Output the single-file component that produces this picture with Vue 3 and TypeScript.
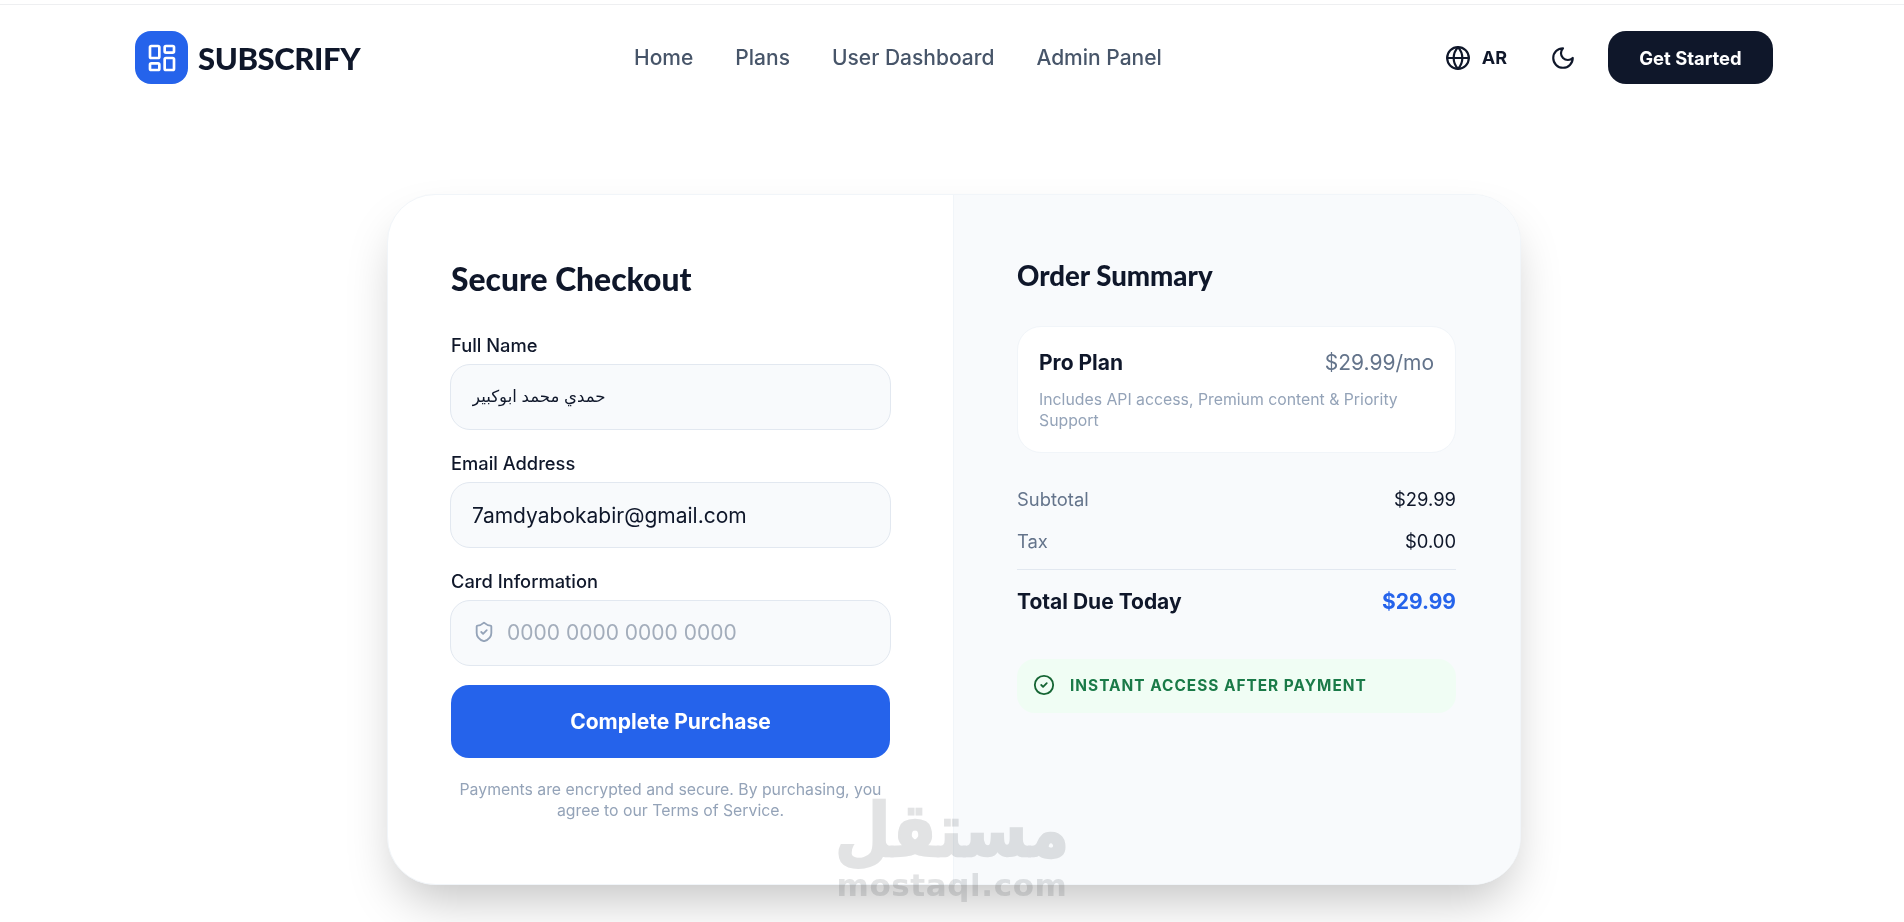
<script setup lang="ts">
import { ref } from 'vue'

const navLinks = ['Home', 'Plans', 'User Dashboard', 'Admin Panel']
const fullName = ref('حمدي محمد ابوكبير')
const email = ref('7amdyabokabir@gmail.com')
const card = ref('')
</script>

<template>
  <div class="page">
    <header class="header">
      <div class="brand">
        <span class="brand-mark">
          <svg width="32" height="32" viewBox="0 0 24 24" fill="none" stroke="#fff" stroke-width="2" stroke-linecap="round" stroke-linejoin="round">
            <rect x="3" y="3" width="7" height="9" rx="1" />
            <rect x="14" y="3" width="7" height="5" rx="1" />
            <rect x="14" y="12" width="7" height="9" rx="1" />
            <rect x="3" y="16" width="7" height="5" rx="1" />
          </svg>
        </span>
        <span class="brand-name">SUBSCRIFY</span>
      </div>
      <nav class="nav">
        <a v-for="link in navLinks" :key="link" class="nav-link">{{ link }}</a>
      </nav>
      <div class="actions">
        <span class="lang">
          <svg width="26" height="26" viewBox="0 0 24 24" fill="none" stroke="#0f172a" stroke-width="2" stroke-linecap="round" stroke-linejoin="round">
            <circle cx="12" cy="12" r="10" />
            <path d="M12 2a14.5 14.5 0 0 0 0 20 14.5 14.5 0 0 0 0-20" />
            <path d="M2 12h20" />
          </svg>
          AR
        </span>
        <svg class="moon" width="26" height="26" viewBox="0 0 24 24" fill="none" stroke="#0f172a" stroke-width="2" stroke-linecap="round" stroke-linejoin="round">
          <path d="M12 3a6 6 0 0 0 9 9 9 9 0 1 1-9-9Z" />
        </svg>
        <button class="cta">Get Started</button>
      </div>
    </header>

    <main class="checkout">
      <section class="form-col">
        <h1 class="title">Secure Checkout</h1>
        <label class="field">
          <span class="label">Full Name</span>
          <input v-model="fullName" class="input arabic" type="text" />
        </label>
        <label class="field">
          <span class="label">Email Address</span>
          <input v-model="email" class="input" type="text" />
        </label>
        <label class="field last">
          <span class="label">Card Information</span>
          <span class="input-wrap">
            <svg class="shield" width="22" height="22" viewBox="0 0 24 24" fill="none" stroke="#94a3b8" stroke-width="2" stroke-linecap="round" stroke-linejoin="round">
              <path d="M20 13c0 5-3.5 7.5-7.66 8.95a1 1 0 0 1-.67-.01C7.5 20.5 4 18 4 13V6a1 1 0 0 1 1-1c2 0 4.5-1.2 6.24-2.72a1.17 1.17 0 0 1 1.52 0C14.51 3.81 17 5 19 5a1 1 0 0 1 1 1z" />
              <path d="m9 12 2 2 4-4" />
            </svg>
            <input v-model="card" class="input with-icon" type="text" placeholder="0000 0000 0000 0000" />
          </span>
        </label>
        <button class="submit">Complete Purchase</button>
        <p class="terms">Payments are encrypted and secure. By purchasing, you agree to our Terms of Service.</p>
      </section>

      <aside class="summary-col">
        <h2 class="subtitle">Order Summary</h2>
        <div class="plan">
          <div class="plan-top">
            <span class="plan-name">Pro Plan</span>
            <span class="plan-price">$29.99/mo</span>
          </div>
          <p class="plan-desc">Includes API access, Premium content &amp; Priority Support</p>
        </div>
        <div class="row first">
          <span class="row-label">Subtotal</span>
          <span>$29.99</span>
        </div>
        <div class="row">
          <span class="row-label">Tax</span>
          <span>$0.00</span>
        </div>
        <div class="total">
          <span>Total Due Today</span>
          <span class="total-value">$29.99</span>
        </div>
        <div class="notice">
          <svg width="22" height="22" viewBox="0 0 24 24" fill="none" stroke="#166534" stroke-width="2" stroke-linecap="round" stroke-linejoin="round">
            <circle cx="12" cy="12" r="10" />
            <path d="m9 12 2 2 4-4" />
          </svg>
          <span>INSTANT ACCESS AFTER PAYMENT</span>
        </div>
      </aside>
    </main>

    <div class="watermark">
      <span class="wm-ar">مستقل</span>
      <span class="wm-en">mostaql.com</span>
    </div>
  </div>
</template>

<style>
html,
body {
  margin: 0;
  height: 100%;
  overflow: hidden;
  background: #fff;
}
</style>

<style scoped>
.page {
  position: relative;
  height: 922px;
  box-sizing: border-box;
  padding: 0 131px 0 135px;
  border-top: 1px solid transparent;
  font-family: Inter, "Liberation Sans", sans-serif;
  color: #0f172a;
  overflow: hidden;
}
.page::before {
  content: "";
  position: absolute;
  top: 3px;
  left: 0;
  right: 0;
  height: 1px;
  background: #eeeff1;
}

/* header */
.header {
  display: flex;
  align-items: center;
  justify-content: space-between;
  margin-top: 30px;
  height: 53px;
}
.brand {
  display: flex;
  align-items: center;
  gap: 10px;
}
.brand-mark {
  width: 53px;
  height: 53px;
  border-radius: 16px;
  background: #2563eb;
  display: flex;
  align-items: center;
  justify-content: center;
}
.brand-name {
  font-family: Lato, sans-serif;
  font-weight: 900;
  font-size: 31px;
  letter-spacing: -0.4px;
}
.nav {
  display: flex;
  gap: 42px;
  margin-right: 8px;
}
.nav-link {
  font-size: 21px;
  font-weight: 500;
  color: #475569;
}
.actions {
  display: flex;
  align-items: center;
}
.lang {
  display: flex;
  align-items: center;
  gap: 11px;
  font-size: 18px;
  font-weight: 700;
  margin-left: 1px;
}
.moon {
  margin-left: 43px;
}
.cta {
  margin-left: 32px;
  width: 165px;
  height: 53px;
  border: 0;
  border-radius: 18px;
  background: #0f172a;
  color: #fff;
  font-family: inherit;
  font-size: 18.4px;
  font-weight: 700;
}

/* checkout card */
.checkout {
  display: grid;
  grid-template-columns: 1fr 1fr;
  width: 1134px;
  box-sizing: border-box;
  margin: 110px auto 0;
  background: #fff;
  border: 1px solid #f1f5f9;
  border-radius: 48px;
  box-shadow: 0 25px 50px -12px rgba(0, 0, 0, 0.25);
  overflow: hidden;
}
.form-col {
  padding: 63px 63px 63px 62px;
}
.summary-col {
  padding: 63px 64px 63px 63px;
  background: #f8fafc;
  border-left: 1px solid #f1f5f9;
  margin-left: -1px;
}
.title {
  margin: 0 0 32px 1px;
  font-family: Lato, sans-serif;
  font-size: 31.8px;
  line-height: 42px;
  font-weight: 900;
}
.field {
  display: block;
  margin-bottom: 20px;
}
.field.last {
  margin-bottom: 19px;
}
.label {
  display: block;
  margin: 0 0 6px 1px;
  font-size: 18.3px;
  line-height: 26px;
  font-weight: 500;
}
.input {
  display: block;
  width: 100%;
  height: 66px;
  box-sizing: border-box;
  padding: 0 21px;
  border: 1.5px solid #e2e8f0;
  border-radius: 20px;
  background: #f8fafc;
  font-family: inherit;
  font-size: 21px;
  color: #0f172a;
  outline: none;
}
.input.arabic {
  font-family: "Liberation Sans", "DejaVu Sans", sans-serif;
  font-size: 16.6px;
}
.input::placeholder {
  color: #a3adbb;
}
.input-wrap {
  position: relative;
  display: block;
}
.shield {
  position: absolute;
  left: 23px;
  top: 21px;
}
.input.with-icon {
  padding-left: 56px;
  padding-bottom: 2px;
}
.submit {
  display: block;
  width: 439px;
  height: 73px;
  margin: 0 1px;
  border: 0;
  border-radius: 18px;
  background: #2563eb;
  color: #fff;
  font-family: inherit;
  font-size: 21px;
  font-weight: 700;
}
.terms {
  margin: 21px 0 0;
  font-size: 15.8px;
  line-height: 21px;
  color: #94a3b8;
  text-align: center;
}

/* summary */
.subtitle {
  margin: 0 0 33px;
  font-family: Lato, sans-serif;
  font-size: 27.6px;
  line-height: 35px;
  font-weight: 900;
}
.plan {
  padding: 22px 21px 21px;
  border: 1px solid #f1f5f9;
  border-radius: 24px;
  background: #fff;
}
.plan-top {
  display: flex;
  justify-content: space-between;
  line-height: 28px;
}
.plan-name {
  font-size: 21px;
  font-weight: 700;
}
.plan-price {
  font-size: 21px;
  color: #64748b;
}
.plan-desc {
  margin: 12px 0 0;
  font-size: 15.8px;
  line-height: 21px;
  color: #94a3b8;
}
.row {
  display: flex;
  justify-content: space-between;
  margin-top: 18px;
  font-size: 18.4px;
  line-height: 24px;
}
.row.first {
  margin-top: 34px;
}
.row-label {
  color: #64748b;
}
.total {
  display: flex;
  justify-content: space-between;
  margin-top: 16px;
  padding-top: 18px;
  border-top: 1px solid #e2e8f0;
  font-size: 21px;
  line-height: 28px;
  font-weight: 700;
}
.total-value {
  color: #2563eb;
}
.notice {
  display: flex;
  align-items: center;
  gap: 15px;
  height: 52px;
  margin-top: 43px;
  padding: 0 0 2px 16px;
  border-radius: 18px;
  background: #f0fdf4;
  color: #1a7a48;
  font-size: 15.4px;
  font-weight: 700;
  letter-spacing: 1px;
}

/* watermark laid over the page */
.watermark {
  position: absolute;
  left: 838px;
  top: 792px;
  width: 228px;
  display: flex;
  flex-direction: column;
  align-items: center;
  color: #e2e3e4;
  mix-blend-mode: multiply;
  font-family: "DejaVu Sans", sans-serif;
  font-weight: 700;
  pointer-events: none;
}
.wm-ar {
  font-size: 64px;
  line-height: 76px;
  transform: scaleY(1.15);
  -webkit-text-stroke: 2px #e2e3e4;
}
.wm-en {
  font-size: 31px;
  line-height: 32px;
  letter-spacing: 0.6px;
  white-space: nowrap;
}
</style>
